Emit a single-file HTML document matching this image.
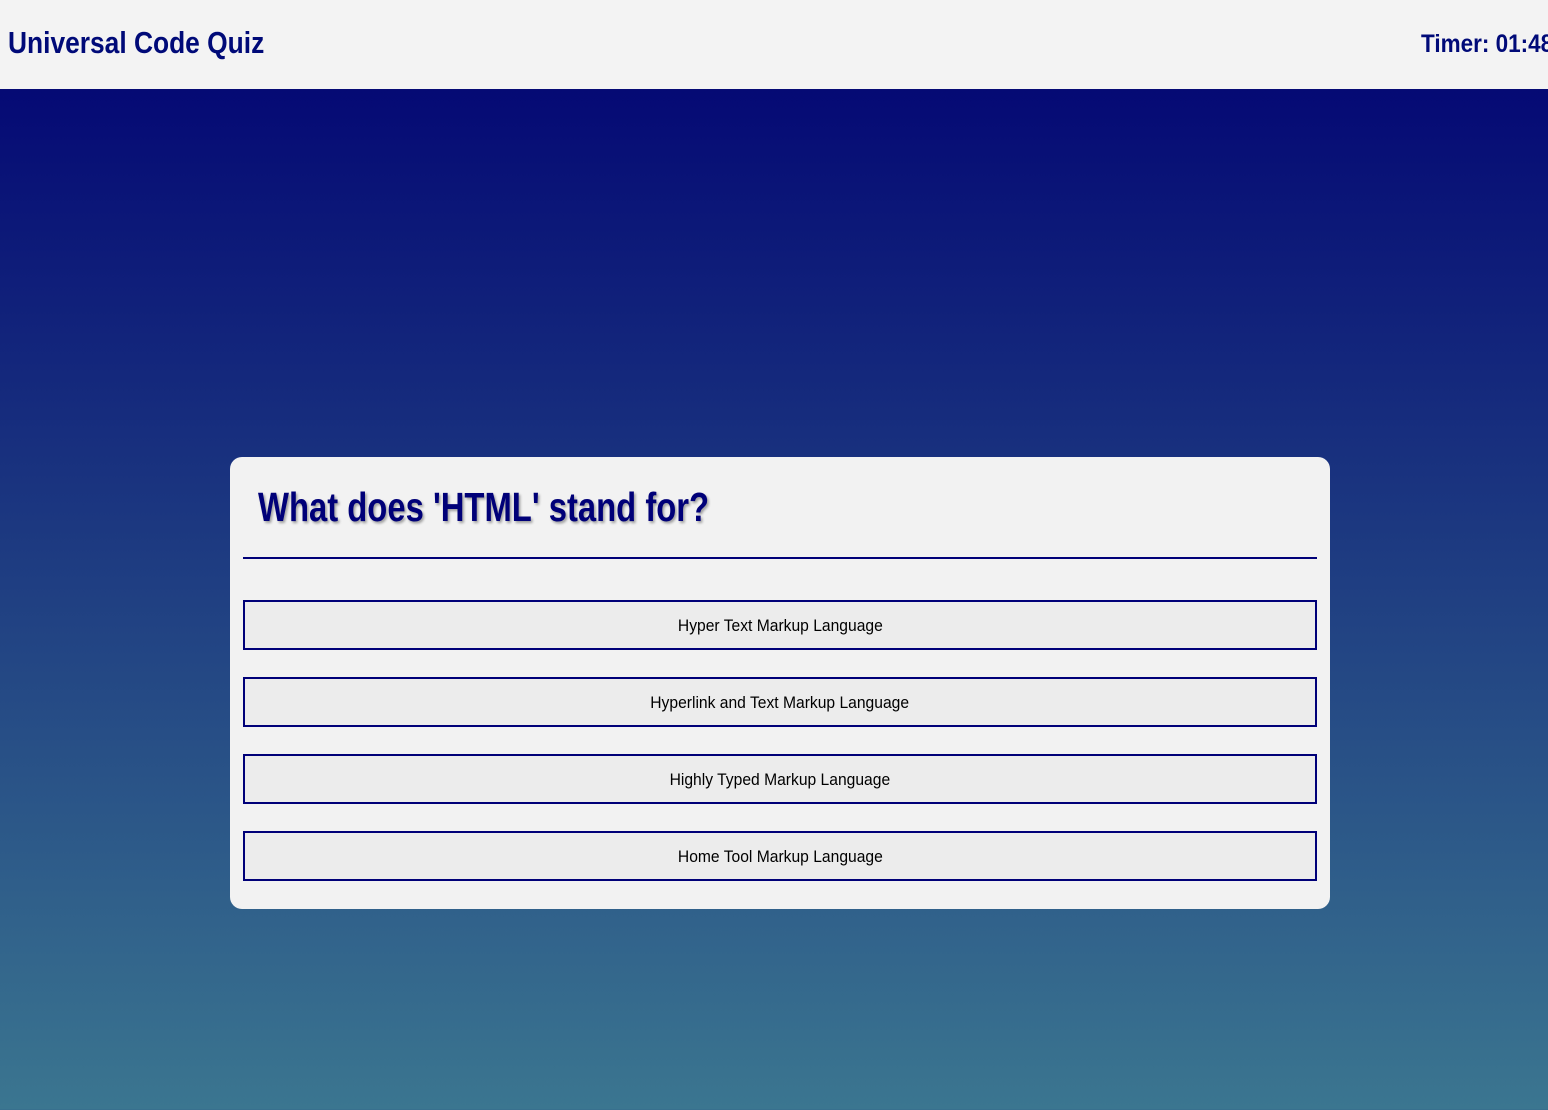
<!DOCTYPE html>
<html><head><style>
*{margin:0;padding:0;box-sizing:border-box}
body{width:1548px;height:1110px;overflow:hidden;position:relative;font-family:"Liberation Sans",sans-serif;background:linear-gradient(#000072 0%,#3b7690 100%)}
header{position:absolute;left:0;top:0;width:1548px;height:89px;background:#f3f3f3}
.t{position:absolute;left:8px;top:25px;font-size:31px;font-weight:bold;color:#000a78;transform:scaleX(.85);transform-origin:0 0;white-space:nowrap}
.tm{position:absolute;left:1421px;top:30px;font-size:25px;font-weight:bold;color:#000a78;white-space:nowrap;transform:scaleX(.9);transform-origin:0 0}
.card{position:absolute;left:230px;top:457px;width:1100px;height:452px;background:#f2f2f2;border-radius:12px}
.q{position:absolute;left:28px;top:27px;font-size:41px;font-weight:bold;color:#000078;text-shadow:2px 2px 3px rgba(0,0,0,.35);white-space:nowrap;transform:scaleX(.8);transform-origin:0 0}
.hr{position:absolute;left:13px;top:100px;width:1074px;height:2px;background:#000078}
.b{position:absolute;left:13px;width:1074px;height:50px;border:2px solid #000078;background:#ececec;font-size:17px;color:#000;text-align:center;line-height:47px}
.b span{display:inline-block;transform:scaleX(.92)}
</style></head><body>
<header><div class="t">Universal Code Quiz</div><div class="tm">Timer: 01:48</div></header>
<div class="card">
<div class="q">What does 'HTML' stand for?</div>
<div class="hr"></div>
<div class="b" style="top:143px"><span>Hyper Text Markup Language</span></div>
<div class="b" style="top:220px"><span>Hyperlink and Text Markup Language</span></div>
<div class="b" style="top:297px"><span>Highly Typed Markup Language</span></div>
<div class="b" style="top:374px"><span>Home Tool Markup Language</span></div>
</div>
</body></html>
